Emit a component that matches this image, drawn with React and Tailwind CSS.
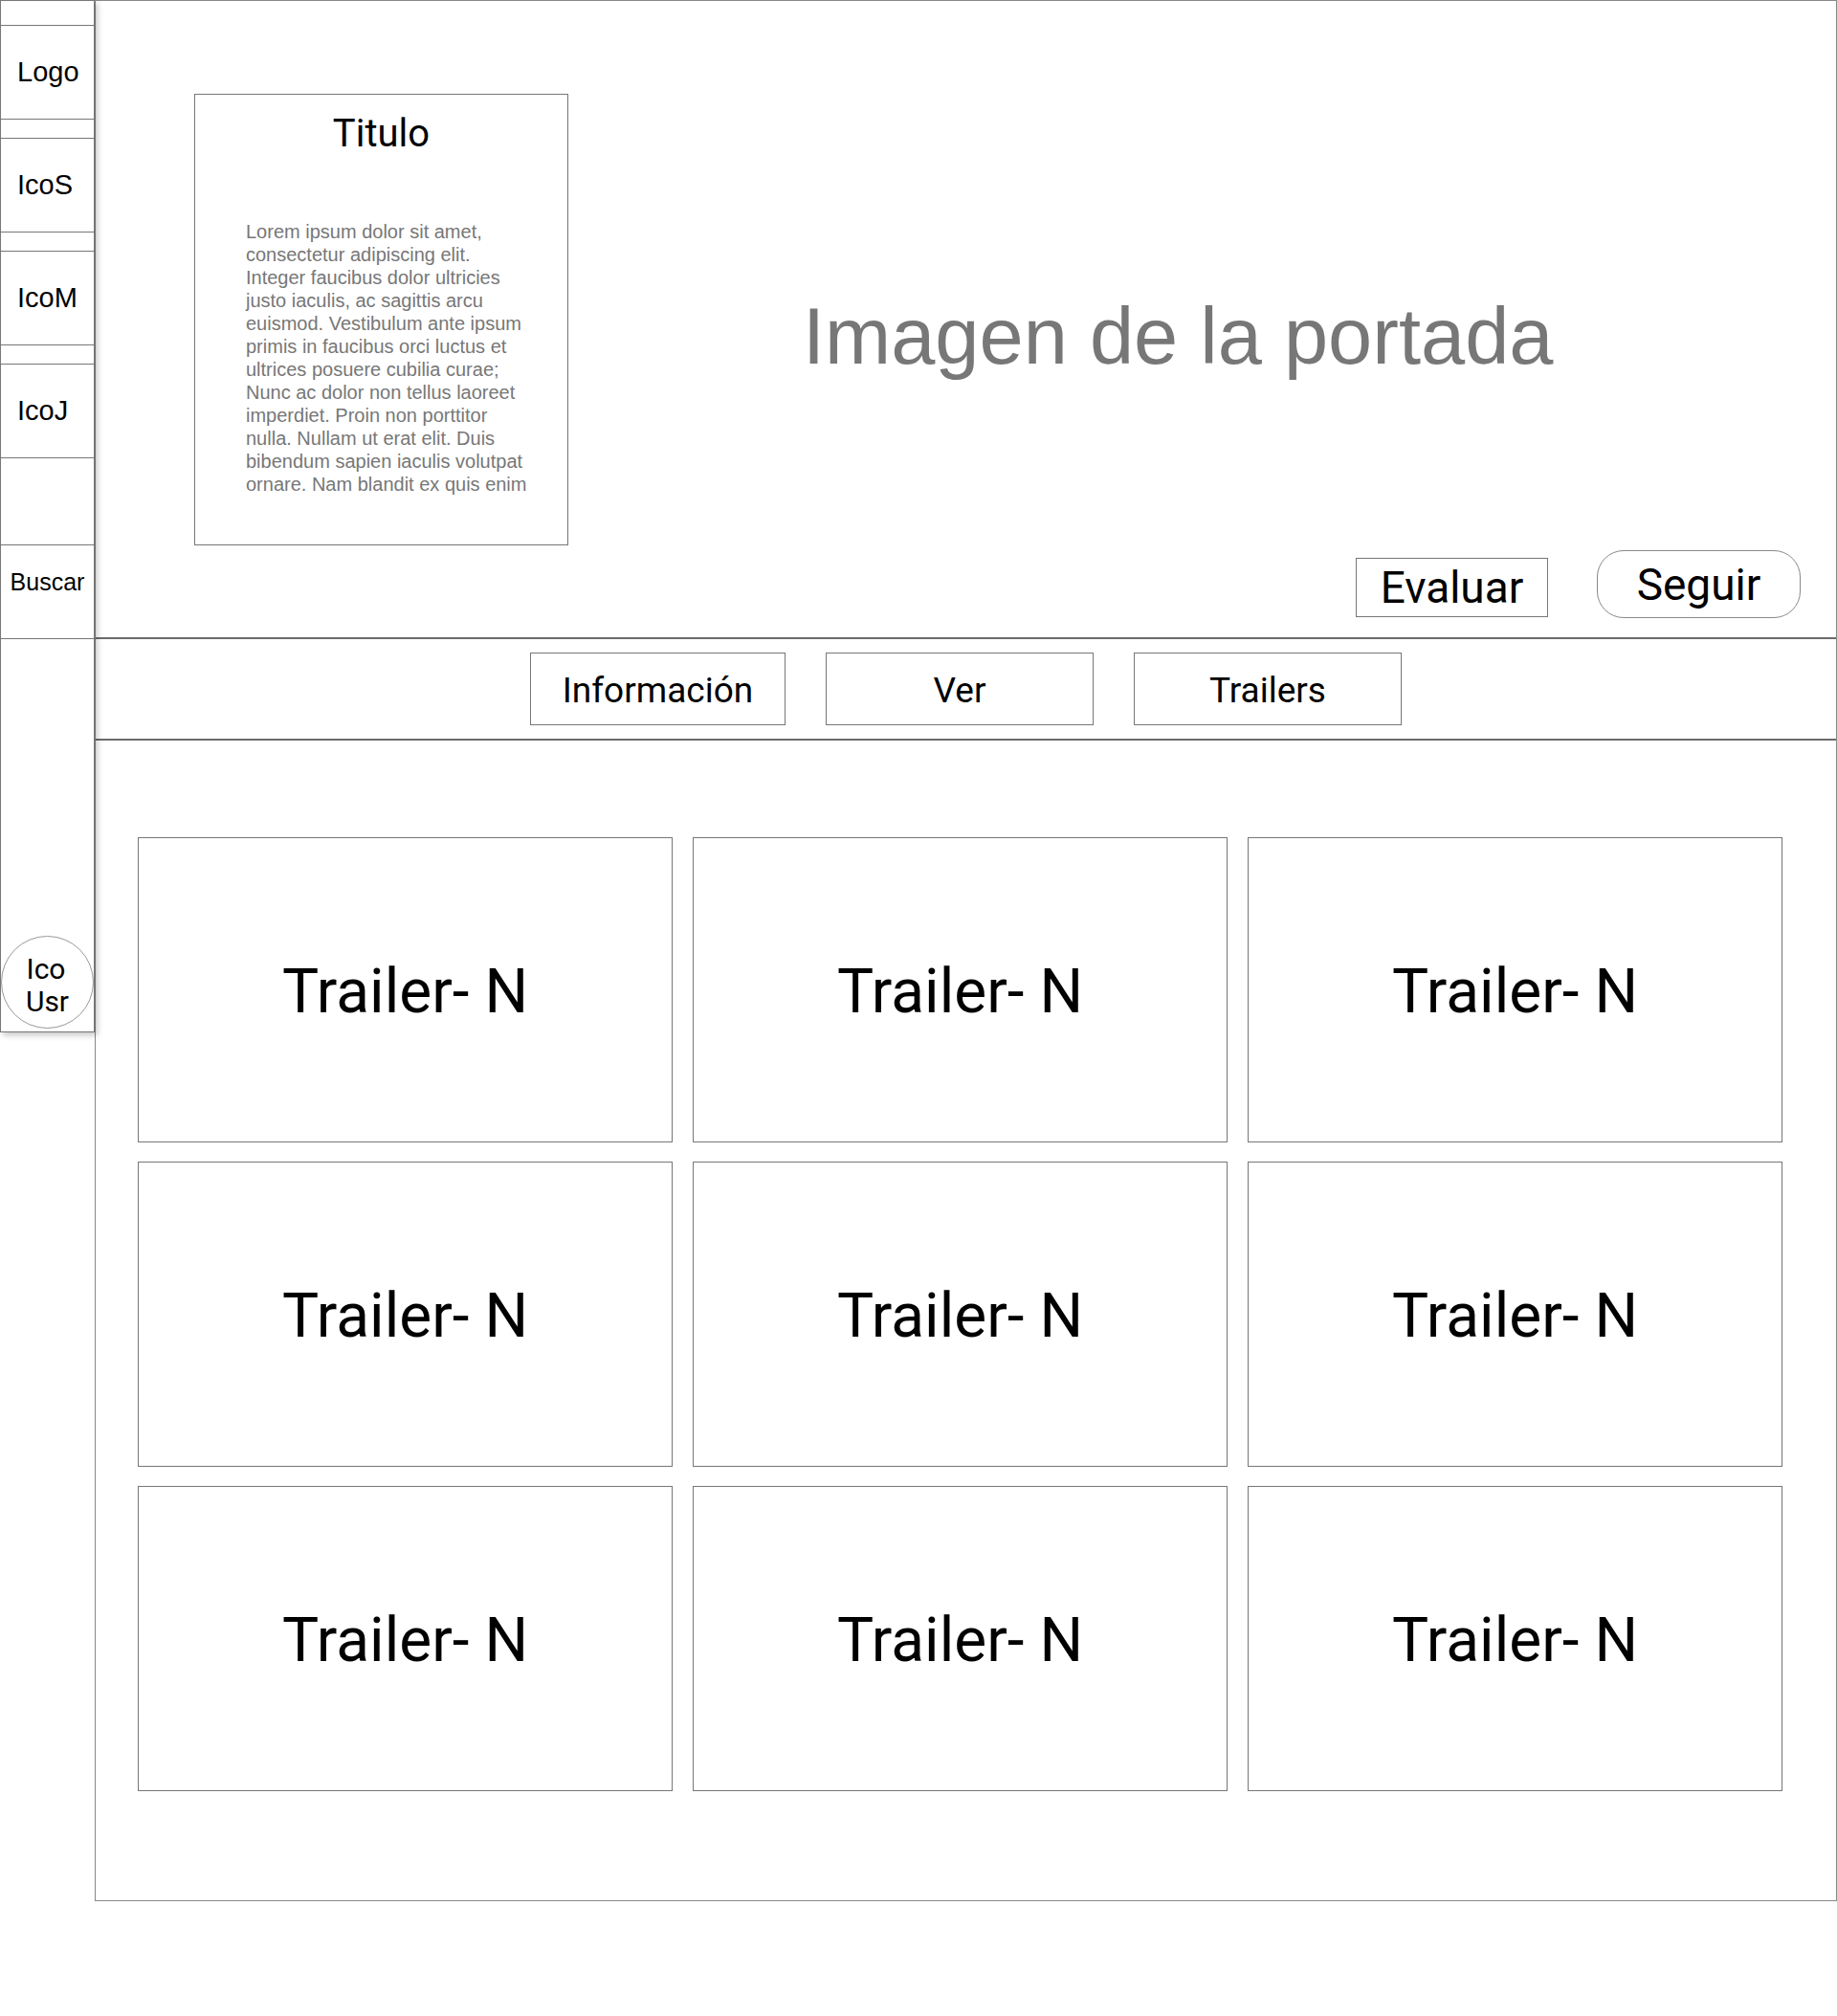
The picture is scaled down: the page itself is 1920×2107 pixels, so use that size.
const helv = { fontFamily: '"Liberation Sans", Arial, sans-serif' };
const sf = { fontFamily: 'Roboto, "Liberation Sans", sans-serif' };

const lorem = [
  'Lorem ipsum dolor sit amet,',
  'consectetur adipiscing elit.',
  'Integer faucibus dolor ultricies',
  'justo iaculis, ac sagittis arcu',
  'euismod. Vestibulum ante ipsum',
  'primis in faucibus orci luctus et',
  'ultrices posuere cubilia curae;',
  'Nunc ac dolor non tellus laoreet',
  'imperdiet. Proin non porttitor',
  'nulla. Nullam ut erat elit. Duis',
  'bibendum sapien iaculis volutpat',
  'ornare. Nam blandit ex quis enim',
];

function Sidebar() {
  return (
    <aside
      className="relative z-10 w-[99px] h-[1079px] shrink-0 flex flex-col border border-[#777] bg-white text-black shadow-[3px_3px_6px_rgba(0,0,0,0.22)]"
      style={helv}
    >
      <div className="h-[26px] shrink-0 border-b border-[#777]" />
      <div className="h-[98px] shrink-0 border-b border-[#777] flex items-center pl-[17px] text-[29px]">Logo</div>
      <div className="h-[20px] shrink-0 border-b border-[#777]" />
      <div className="h-[98px] shrink-0 border-b border-[#777] flex items-center pl-[17px] text-[29px]">IcoS</div>
      <div className="h-[20px] shrink-0 border-b border-[#777]" />
      <div className="h-[98px] shrink-0 border-b border-[#777] flex items-center pl-[17px] text-[29px]">IcoM</div>
      <div className="h-[20px] shrink-0 border-b border-[#777]" />
      <div className="h-[98px] shrink-0 border-b border-[#777] flex items-center pl-[17px] text-[29px]">IcoJ</div>
      <div className="h-[91px] shrink-0 border-b border-[#777]" />
      <div className="h-[98px] shrink-0 border-b border-[#777] flex items-center justify-center pb-[19px] text-[25px]">
        Buscar
      </div>
      <div className="flex-1 flex items-end justify-center pb-[3px]">
        <div
          className="w-[97px] h-[97px] rounded-full border border-[#999] flex flex-col items-center justify-center pt-[6px] text-[30px] leading-[34px] text-center"
          style={sf}
        >
          <span className="-ml-[3px]">Ico</span>
          <span>Usr</span>
        </div>
      </div>
    </aside>
  );
}

function Cover() {
  return (
    <section className="h-[667px] border-b-2 border-[#6b6b6b] flex flex-col">
      <div className="flex pl-[103px] pt-[97px]">
        <div className="w-[391px] h-[472px] shrink-0 border border-[#777] flex flex-col items-center">
          <h1 className="mt-[17px] text-[40px] leading-[48px] text-black" style={sf}>
            Titulo
          </h1>
          <div className="self-start ml-[53px] mt-[66px] text-[20px] leading-[24px] text-[#777]" style={helv}>
            {lorem.map((l) => (
              <div key={l} className="whitespace-nowrap">
                {l}
              </div>
            ))}
          </div>
        </div>
        <div className="ml-[245px] mt-[212px] text-[83px] leading-none text-[#777] whitespace-nowrap" style={helv}>
          Imagen de la portada
        </div>
      </div>
      <div className="flex justify-end items-start gap-[51px] pr-[37px] mt-[5px]" style={sf}>
        <button className="mt-[8px] w-[201px] h-[62px] border border-[#777] text-[46px] leading-none text-black flex items-center justify-center">
          Evaluar
        </button>
        <button className="w-[213px] h-[71px] rounded-[28px] border border-[#888] text-[46px] leading-none text-black flex items-center justify-center">
          Seguir
        </button>
      </div>
    </section>
  );
}

function Tabs() {
  const tabs = [
    ['Información', 'w-[267px]'],
    ['Ver', 'w-[280px]'],
    ['Trailers', 'w-[280px]'],
  ];
  return (
    <nav className="h-[106px] border-b-2 border-[#6b6b6b] flex items-center justify-center gap-[42px]" style={sf}>
      {tabs.map(([label, w]) => (
        <button key={label} className={`${w} h-[76px] border border-[#777] pt-[4px] text-[37px] text-black`}>
          {label}
        </button>
      ))}
    </nav>
  );
}

function TrailerGrid() {
  const items = Array.from({ length: 9 }, (_, i) => i);
  return (
    <div className="pl-[44px] pt-[101px]">
      <div className="grid grid-cols-[559px_559px_559px] gap-x-[21px] gap-y-[20px]">
        {items.map((i) => (
          <div
            key={i}
            className="h-[319px] border border-[#777] flex items-center justify-center pt-[5px] text-[64px] text-black"
            style={sf}
          >
            Trailer- N
          </div>
        ))}
      </div>
    </div>
  );
}

export default function App() {
  return (
    <div className="w-[1920px] h-[2107px] bg-white flex items-start">
      <Sidebar />
      <main className="w-[1821px] h-[1987px] shrink-0 border border-[#888] flex flex-col">
        <Cover />
        <Tabs />
        <TrailerGrid />
      </main>
    </div>
  );
}
